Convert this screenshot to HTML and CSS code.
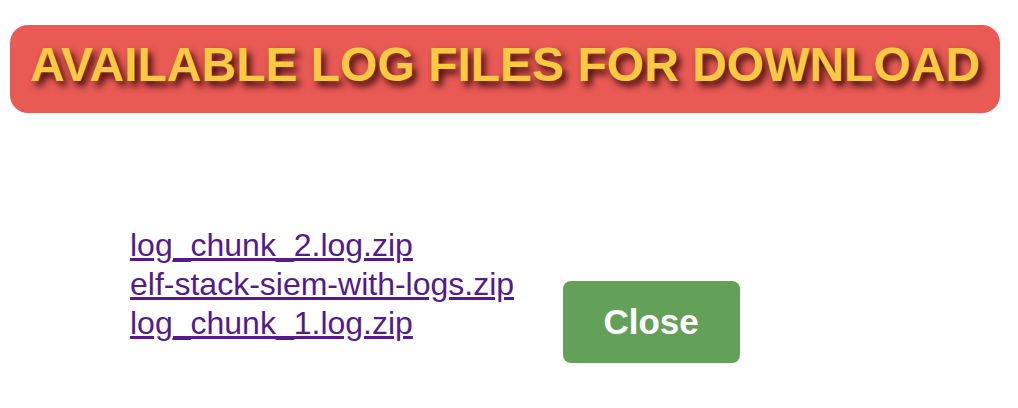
FILE: index.html
```html
<!DOCTYPE html>
<html lang="en">
<head>
    <meta charset="UTF-8">
    <title>Log files</title>
    <link rel="stylesheet" href="styles.css">
</head>
<body>
    <h1 class="banner">AVAILABLE LOG FILES FOR DOWNLOAD</h1>
    <div class="downloads">
        <div class="file-list">
            <a href="#">log_chunk_2.log.zip</a><br>
            <a href="#">elf-stack-siem-with-logs.zip</a><br>
            <a href="#">log_chunk_1.log.zip</a>
        </div>
        <button class="close-btn">Close</button>
    </div>
</body>
</html>
```

FILE: styles.css
```css
body{
    margin: 0;
    font-family: Helvetica, Arial, "Liberation Sans", sans-serif;
    background: #fff;
}
.banner{
    margin: 25px 18px 0 10px;
    height: 88px;
    line-height: 80px;
    box-sizing: border-box;
    background-color: #e95a55;
    border-radius: 18px;
    color: #f8c942;
    font-size: 48px;
    font-weight: bold;
    text-align: center;
    /* 글자 그림자 */
    text-shadow: 4px 5px 7px rgba(40, 0, 0, 0.9);
}
.downloads{
    margin: 113px 0 0 130px;
}
.file-list{
    display: inline-block;
    font-size: 32px;
    line-height: 39px;
}
.file-list a{
    color: #551a8b;
}
.close-btn{
    display: inline-block;
    /* 인라인 공백 만큼 빼기 */
    margin-left: 44px;
    padding: 0;
    width: 177px;
    height: 82px;
    border: none;
    border-radius: 8px;
    background-color: #63a159;
    color: #fff;
    font-family: Helvetica, Arial, "Liberation Sans", sans-serif;
    font-size: 35px;
    font-weight: bold;
}
```
